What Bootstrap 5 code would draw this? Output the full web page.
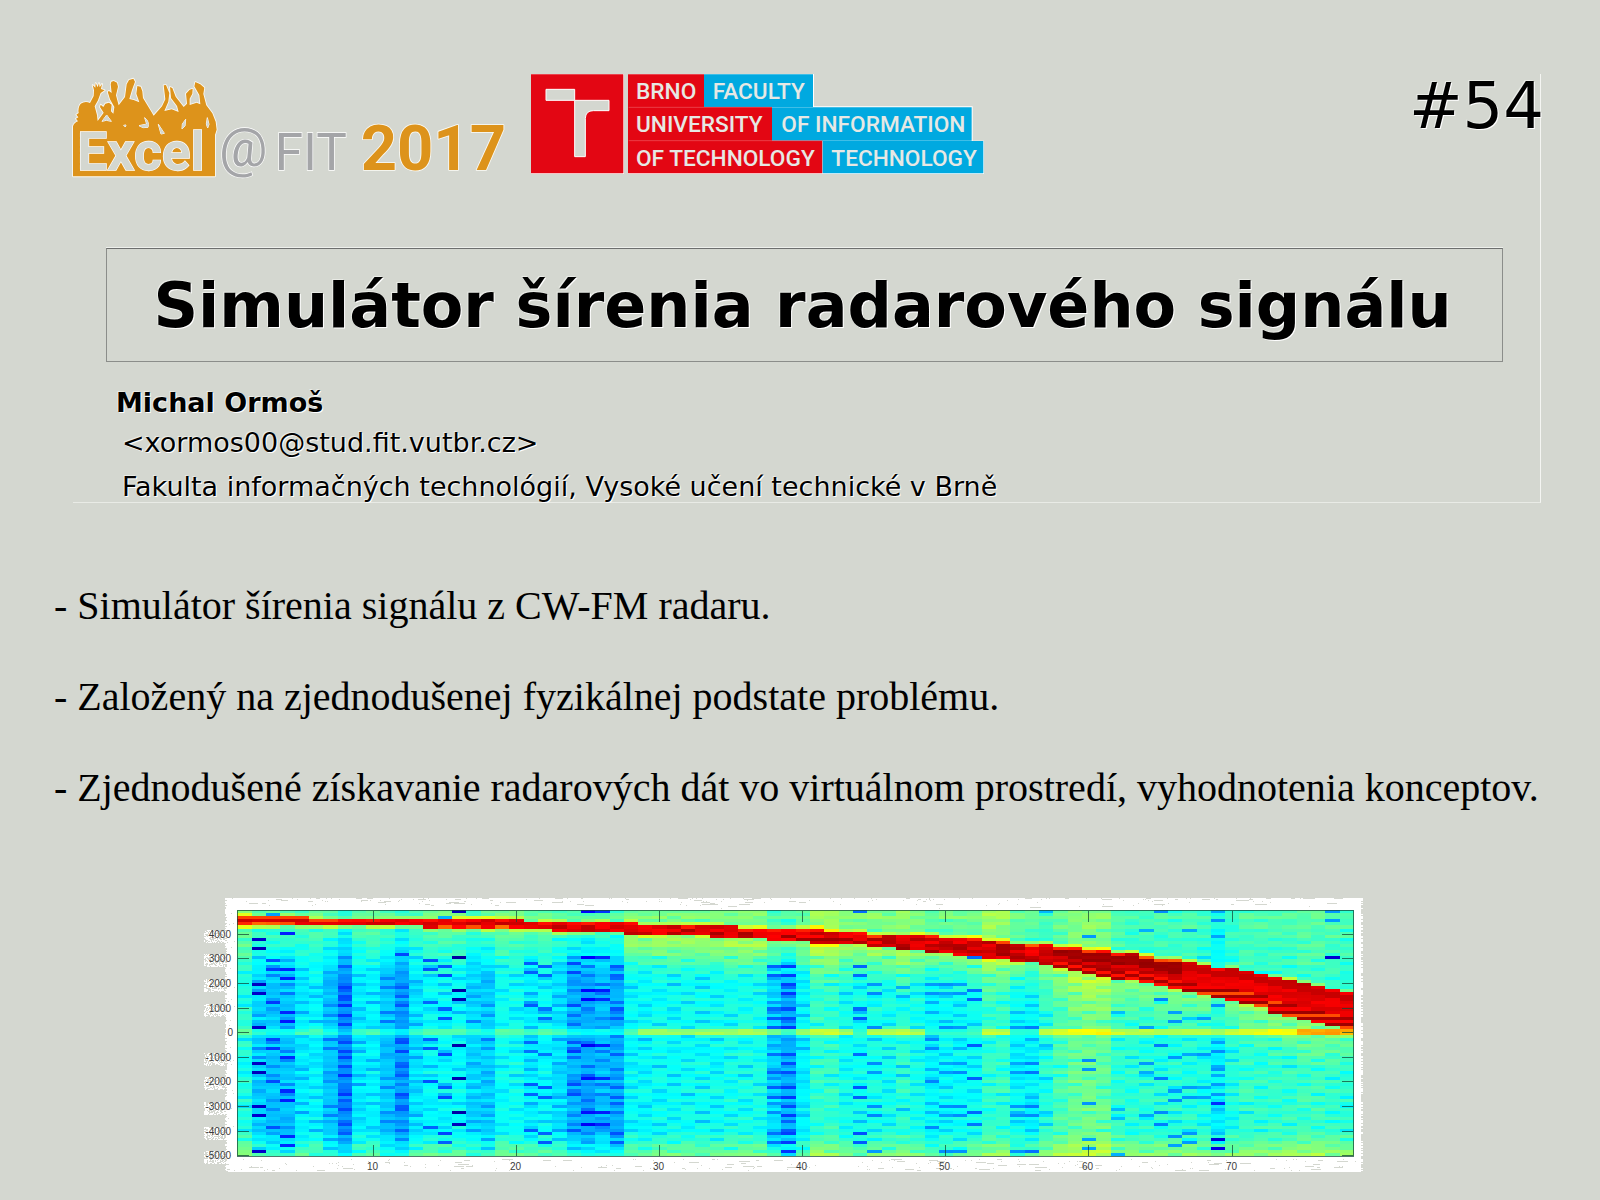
<!DOCTYPE html>
<html lang="sk">
<head>
<meta charset="utf-8">
<meta name="viewport" content="width=device-width, initial-scale=1">
<title>Simulátor šírenia radarového signálu</title>
<link href="https://cdn.jsdelivr.net/npm/bootstrap@5.3.0/dist/css/bootstrap.min.css" rel="stylesheet">
<style>
:root { --paper: #d4d7d0; }
body { background: var(--paper); color: #000; font-family: "DejaVu Sans", sans-serif; }
.poster-head { margin: 74px 59px 0 73px; border-right: 1px solid #f4f5f2; border-bottom: 1px solid #e9ebe6; text-shadow: 1px 1px 0 #fff, -1px -1px 0 #e9ebe6; }
.logos { gap: 25px; }
.logos svg { overflow: visible; text-shadow: none; }
.poster-id { font-size: 64px; line-height: 64px; margin-right: -4px; }
.title-box { margin: 68px 37px 0 33px; border: 1px solid #8b8d8a; border-top-color: #6d6f6e; padding: 17px 4px 15px 0; box-shadow: 0 -1px 0 #eef0ec; }
.title-box h1 { font-size: 62px; line-height: 80px; font-weight: 700; margin: 0; }
.authors { font-size: 27px; line-height: 30px; padding: 26px 0 0 43px; }
.authors a { color: inherit; }
.author-mail { padding: 10px 0 0 6px; }
.author-school { padding: 14px 0 0 6px; }
.points { font-family: "Liberation Serif", serif; font-size: 40px; line-height: 48px; margin: 79px 0 0 54px; gap: 43px; }
.plot { width: 73%; margin: 84px 0 0 12.5%; }
</style>
</head>
<body>
<header class="poster-head">
  <div class="d-flex justify-content-between align-items-start">
    <div class="logos d-flex align-items-start">
      <svg width="433" height="106" viewBox="39 27 1299 318" role="img" aria-label="Excel@FIT 2017">
        <g fill="#dd931b" stroke="#fbfbf6" stroke-width="5" paint-order="stroke" stroke-linejoin="round">
          <path d="M39 334V184Q42 173 54 169L48 161L55 157L49 149L56 144Q53 128 62 116Q76 107 90 114L101 93L102 76L98 60L106 68L107 54L113 67L117 54L119 67L126 57L123 72L134 76L122 84L114 106L104 124L111 150L113 168L131 143L120 126L122 119L130 126L136 116L147 113L155 119L153 139L160 146L163 126L150 103L143 80L147 78L155 84L152 58L154 50L161 48L171 53L174 65L168 91L176 121L195 96L200 58L207 45L220 41L225 50L216 75L208 102L221 105L238 112L229 86L232 63L242 65L247 79L249 99L275 142L281 152L306 124L316 103L311 61L318 60L328 84L325 110L313 138L335 133L356 141L351 123L333 99L330 66L337 69L347 95L371 126L381 116L378 86L389 74L398 71L397 86L389 101L389 120L410 113L421 118L418 90L403 64L406 51L421 58L433 68L430 87L439 121L457 145L467 170L470 194L465 210V334Z"/>
          <path fill="#d4d7d0" stroke="#fff" stroke-width="3" d="M126 169L140 150L154 169L139 166ZM191 181L198 180L196 186ZM237 182L260 177L254 158Q269 170 264 187L249 188ZM295 178L313 205L303 207ZM377 163L367 177L366 192L375 183ZM442 158L439 177L443 189L447 178Z"/>
          <text x="902" y="315" font-family="Roboto, sans-serif" font-weight="700" font-size="190">2017</text>
        </g>
        <text x="52" y="315" font-family="Roboto, sans-serif" font-weight="700" font-size="160" fill="#d4d7d0" stroke="#fff" stroke-width="4" paint-order="stroke">Excel</text>
        <g font-family="Roboto, sans-serif" fill="#a4a5a8" stroke="#fff" stroke-width="4" paint-order="stroke">
          <text x="477" y="303" font-weight="400" font-size="162">@</text>
          <text x="644" y="315" font-weight="400" font-size="154">FIT</text>
        </g>
      </svg>
      <svg width="453" height="100" viewBox="-237 27 1359 300" role="img" aria-label="Brno University of Technology, Faculty of Information Technology">
        <path fill="#fff" d="M-237 27H42V327H-237ZM54 27H612V124H1088V227H1122V327H54Z"/>
        <path fill="#e30613" d="M-237 28H40V325H-237ZM54 28H282V126H486V227H637V325H54Z"/>
        <path fill="#00a9e0" d="M282 28H609V126H282ZM486 127H1085V227H486ZM638 228H1120V325H638Z"/>
        <path stroke="#ef5a60" stroke-width="2" d="M56 127H486M56 227H637"/>
        <path fill="#d4d7d0" stroke="#fff" stroke-width="3" d="M-192 73H-106V106H-3V137H-50Q-73 137-74 160V275H-106V106H-192Z"/>
        <g font-family="Roboto, sans-serif" font-weight="500" font-size="68" fill="#e6e8e4">
          <text x="78" y="103">BRNO</text><text x="308" y="103">FACULTY</text>
          <text x="78" y="202">UNIVERSITY</text><text x="514" y="202">OF INFORMATION</text>
          <text x="78" y="302">OF TECHNOLOGY</text><text x="664" y="302">TECHNOLOGY</text>
        </g>
      </svg>
    </div>
    <div class="poster-id">#54</div>
  </div>
  <div class="title-box text-center"><h1>Simulátor šírenia radarového signálu</h1></div>
  <address class="authors mb-0">
    <strong class="d-block">Michal Ormoš</strong>
    <div class="author-mail"><a class="text-decoration-none" href="mailto:xormos00@stud.fit.vutbr.cz">&lt;xormos00@stud.fit.vutbr.cz&gt;</a></div>
    <div class="author-school">Fakulta informačných technológií, Vysoké učení technické v Brně</div>
  </address>
</header>
<main>
  <div class="points d-flex flex-column">
    <div>- Simulátor šírenia signálu z CW-FM radaru.</div>
    <div>- Založený na zjednodušenej fyzikálnej podstate problému.</div>
    <div>- Zjednodušené získavanie radarových dát vo virtuálnom prostredí, vyhodnotenia konceptov.</div>
  </div>
  <svg class="plot d-block" id="plot" viewBox="200 896 1168 280" role="img" aria-label="Spektrogram"></svg>
</main>
<script>
const svg = document.getElementById('plot');
const X0 = 237.3, Y0 = 910.3, W = 1116.7, H = 246, COLS = 78, ROWS = 81;
let seed = 7;
const rnd = () => (seed = (seed * 16807) % 2147483647) / 2147483647;
const clamp = (v, a, b) => Math.max(a, Math.min(b, v));
const jet = v => 'rgb(' + [.75, .5, .25].map(c => Math.round(255 * clamp(1.5 - Math.abs(v - c) * 4, 0, 1))).join() + ')';
const rect = (x, y, w, h, f) => `<rect x="${x}" y="${y}" width="${w}" height="${h}" fill="${f}"/>`;

// Mean level of each column
const base = [41,34,32,32,36,37,32,26,36,37,32,28,35,38,38,38,34,33,39,39,36,38,35,30,29,31,30,38,38,39,39,39,39,39,40,40,40,34,30,37,43,43,40,39,40,40,42,40,37,38,38,39,43,43,38,37,42,45,48,49,48,43,42,42,42,42,42,41,37,41,43,43,43,43,44,44,43,42];
// Rows in which a column drops, and the level it drops to
const A = [15,26,29,44,55,66,70], B = [18,21,32,35,47,58,61,73,76], C = [24,27,38,50,53,64,67,79], D = [16,19,30,42,45,56,71], E = [17,20,31,43,46,57,60,72], F = [33,36,48,59,62,74,77];
const dips = {2:[[9,12,...C],5],3:[D,18],4:[[7,19,22,...F],14],8:[[25,28,31,34,37,43,46,51,54,60,65],17],12:[[14,25,28,31,43,46,51,54,60,65],19],14:[D,20],15:[B,19],16:[[0,...A],3],
 21:[E,21],22:[B,21],24:[E,18],25:[[0,...A],11],26:[[0,...A],15],27:[B,20],38:[[38,53,...B],21],39:[[...C,...B],17],44:[[0,...B],20],45:[C,25],47:[[25,28,51,54,65],29],49:[[24,27,42,45,56,71],25],50:[C,26],51:[C,25],52:[A,21],
 55:[[38,50,53,64,67,79],26],56:[[38,50,53,64,67,79],23],57:[[0,44,55,66,70],30],60:[[8,49,52,63,75,78],26],62:[[33,65,68,80],29],64:[[6,38,50,53,67],27],65:[[0,29,44,55,66,70],24],66:[F,26],67:[[6,47,58,61,73,76],27],68:[[35,47,58,61],27],69:[[0,3,8,31,43,46,52,57,60,63,75,78],26],77:[[0,3],26]};
const special = {'69,63':17,'69,75':9,'69,78':10,'77,15':8,'3,1':28,'15,2':30,'67,35':33,'72,20':37};
// Sweep edges: column, top row, bottom row
const edge = [[1,2.2,4.8],[10,2.8,5.2],[20,3.4,6.1],[26,4.2,7.2],[30,4.6,7.8],[36,5.5,9],[40,6.2,10.2],[45,7.5,11.8],[50,8.7,14.2],[55,10.5,16.6],[60,12.5,20.7],[65,15.7,25.2],[70,19.2,30.2],[75,24,35.8],[78,27,39.4]];
const at = (c, n) => { for (let i = 1; i < edge.length; i++) if (c <= edge[i][0]) { const a = edge[i-1], b = edge[i]; return a[n] + (b[n] - a[n]) * (c - a[0]) / (b[0] - a[0]); } };

function level(c, r) {
  const t = Math.round(at(c, 1)), b = Math.round(at(c, 2));
  const n = rnd();
  if (r >= t && r < b) {
    const k = (r - t) / (b - t);
    if (c < 28) return r === t ? (c < 8 ? .81 : .85 + .08 * n) : r === b - 1 && c < 24 && b - t > 2 ? .76 + .15 * n : .88 + .06 * n;
    if (r === t) return c < 45 ? .84 + .1 * n : c > 66 ? .86 + .1 * n : .78 + .18 * n;
    if (c < 58) return .87 + .1 * n;
    if (c < 67) return k < .42 ? .96 + .02 * n : k < .62 ? .9 + .05 * n : (r + c) % 2 ? .86 : .96;
    if (k > .6) return [.96, .88, .97, .8][(r + (c > 72 ? 1 : 0)) % 4];
    return k < .22 ? .93 : .88 + .035 * n;
  }
  const key = c + ',' + r;
  if (special[key]) return special[key] / 100;
  if (dips[c] && dips[c][0].includes(r)) return dips[c][1] / 100 + .03 * n;
  let v = base[c-1] / 100;
  const dim = v < .34 ? 1.4 : 1;
  if (r < 22) v += clamp((22 - r) / 20, 0, 1) * (c > 56 ? .03 : .11) * dim;
  if (r > 72) v += (r - 72) * .012;
  if (r > b && r < b + 14 && c > 27) v += .006 * (b + 14 - r);
  if (r === t - 1 || r === b) v += c > 40 ? .06 + .06 * n : .02 + .09 * n;
  if (r >= 39 && r <= 40) v += (c > 28 ? .14 : .08) + (c > 74 ? .07 : 0) - (/^(44|49|5[0126]|55)$/.test(c) ? .1 : 0);
  v += ((r * 7 + c * 3) % 3 - 1) * .012 + (n - .5) * .035;
  const weak = (r + (c * 5) % 11) % 11;
  if ((weak === 0 || weak === 3) && (r < 39 || r > 40)) v -= r < 15 ? .03 : .055;
  return v;
}

let out = rect(225, 898, 1138, 274, '#fff');
// Ragged edge of the white surround
for (let i = 0; i < 430; i++) {
  const w = rnd() < .35 ? 3 + Math.floor(rnd() * 9) : 1;
  out += rect(226 + Math.floor(rnd() * 1130), Math.floor(rnd() < .5 ? 898 + rnd() * rnd() * 11 : 1159 + rnd() * 12), w, 1, '#d4d7d0');
}
for (let y = 898; y < 1172; y++) {
  if (rnd() < .5) out += rect(225, y, 1 + Math.floor(rnd() * 2), 1, '#d4d7d0');
  if (rnd() < .5) out += rect(1361, y, 2, 1, '#d4d7d0');
  if (rnd() < .1) out += rect(227 + Math.floor(rnd() * 8), y, 1, 1, '#d4d7d0');
}
const ticks = [4000, 3000, 2000, 1000, 0, -1000, -2000, -3000, -4000, -5000];
const tickY = i => 934.7 + i * 24.63;
ticks.forEach((v, i) => {
  if (v === 0) return;
  for (let y = -5; y < 8; y++) for (let x = 0; x < 21; x++)
    if (rnd() < .55) out += rect(204 + x, Math.round(tickY(i)) + y, 1, 1, '#fff');
});
out += '<g shape-rendering="crispEdges">';
for (let c = 1; c <= COLS; c++) {
  const x1 = Math.round(X0 + (c - 1) * W / COLS), x2 = Math.round(X0 + c * W / COLS);
  for (let r = 0; r < ROWS; r++) {
    const y1 = Math.round(Y0 + r * H / ROWS), y2 = Math.round(Y0 + (r + 1) * H / ROWS);
    out += rect(x1, y1, x2 - x1, y2 - y1, jet(level(c, r)));
  }
}
out += '</g><g stroke="#134a38" stroke-opacity=".75" fill="none">';
out += '<rect x="237.5" y="910.5" width="1116" height="246"/>';
const tx = [10, 20, 30, 40, 50, 60, 70], px = v => Math.floor(X0 + (v - .5) * W / COLS - .2) + .5;
tx.forEach(v => out += `<path d="M${px(v)} 911v11M${px(v)} 1145v11"/>`);
ticks.forEach((v, i) => { const y = Math.round(tickY(i)) - .5; out += `<path d="M238 ${y}h11M1342 ${y}h11"/>`; });
out += '</g><g font-family="Liberation Sans, sans-serif" font-size="10" fill="#3c3c3c">';
ticks.forEach((v, i) => out += `<text x="${v ? 231 : 233}" y="${Math.round(tickY(i)) + 3}" text-anchor="end">${v}</text>`);
tx.forEach(v => out += `<text x="${px(v) - 1}" y="1170" text-anchor="middle">${v}</text>`);
svg.innerHTML = out + '</g>';
</script>
<script src="https://cdn.jsdelivr.net/npm/bootstrap@5.3.0/dist/js/bootstrap.bundle.min.js"></script>
</body>
</html>
